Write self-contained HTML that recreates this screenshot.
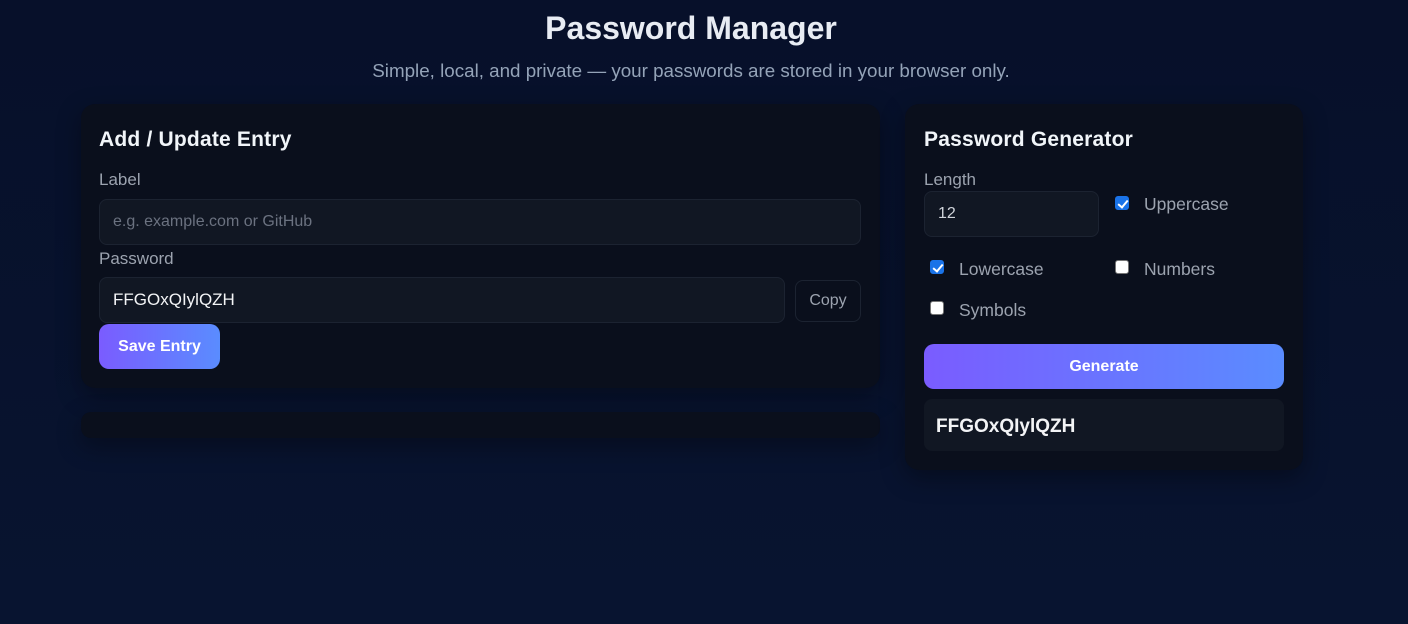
<!DOCTYPE html>
<html><head><meta charset="utf-8"><style>
*{box-sizing:border-box;margin:0;padding:0}
body{width:1408px;height:624px;overflow:hidden;background:linear-gradient(180deg,#07102a 0%,#081430 100%);font-family:"Liberation Sans",sans-serif;color:#e5e7eb;position:relative}
.a{position:absolute}
h1{position:absolute;left:0;width:1382px;text-align:center;top:10px;font-size:32px;font-weight:bold;color:#e8ecf3}
.sub{left:0;width:1382px;text-align:center;top:60px;font-size:18.8px;color:#94a3b8}
.card{background:#0a0f1c;border-radius:14px;box-shadow:0 8px 24px rgba(0,0,0,.35)}
.h2{font-size:21px;font-weight:bold;color:#f1f5f9;letter-spacing:0.2px}
.lbl{font-size:17px;color:#9ca3af}
.inp{background:#111723;border:1px solid #1c2331;border-radius:8px;font-size:17px;padding-left:13px;display:flex;align-items:center}
.btn{background:linear-gradient(90deg,#7a5cff,#5a8cff);border-radius:10px;color:#fff;font-weight:bold;font-size:16px;display:flex;align-items:center;justify-content:center}
.cb{width:14px;height:14px;border-radius:3px;background:#fff;border:1px solid #767676}
.cb.on{background:#1a73e8;border-color:#1a73e8}
.cb.on::after{content:"";position:absolute;left:4px;top:1px;width:4px;height:8px;border:solid #fff;border-width:0 2px 2px 0;transform:rotate(40deg)}
.ct{font-size:17.5px;color:#9ca3af}
</style></head><body>
<h1>Password Manager</h1>
<div class="a sub">Simple, local, and private — your passwords are stored in your browser only.</div>

<div class="a card" style="left:81px;top:104px;width:799px;height:284px"></div>
<div class="a h2" style="left:99px;top:128px">Add / Update Entry</div>
<div class="a lbl" style="left:99px;top:170px">Label</div>
<div class="a inp" style="left:99px;top:199px;width:762px;height:46px;color:#6b7280;font-size:16px">e.g. example.com or GitHub</div>
<div class="a lbl" style="left:99px;top:249px">Password</div>
<div class="a inp" style="left:99px;top:277px;width:686px;height:46px;color:#f3f4f6">FFGOxQIylQZH</div>
<div class="a" style="left:795px;top:280px;width:66px;height:42px;border:1px solid #1c2331;border-radius:8px;color:#9ca3af;font-size:16px;display:flex;align-items:center;justify-content:center">Copy</div>
<div class="a btn" style="left:99px;top:324px;width:121px;height:45px">Save Entry</div>
<div class="a card" style="left:81px;top:412px;width:799px;height:26px;border-radius:10px"></div>

<div class="a card" style="left:905px;top:104px;width:398px;height:366px"></div>
<div class="a h2" style="left:924px;top:128px">Password Generator</div>
<div class="a lbl" style="left:924px;top:170px">Length</div>
<div class="a inp" style="left:924px;top:191px;width:175px;height:46px;color:#d1d5db;font-size:16px">12</div>
<div class="a cb on" style="left:1115px;top:196px"></div><div class="a ct" style="left:1144px;top:194px">Uppercase</div>
<div class="a cb on" style="left:930px;top:260px"></div><div class="a ct" style="left:959px;top:259px">Lowercase</div>
<div class="a cb" style="left:1115px;top:260px"></div><div class="a ct" style="left:1144px;top:259px">Numbers</div>
<div class="a cb" style="left:930px;top:301px"></div><div class="a ct" style="left:959px;top:300px">Symbols</div>
<div class="a btn" style="left:924px;top:344px;width:360px;height:45px">Generate</div>
<div class="a" style="left:924px;top:399px;width:360px;height:52px;background:#111723;border-radius:8px;font-size:19px;font-weight:bold;color:#f3f4f6;padding-left:12px;display:flex;align-items:center;padding-top:3px">FFGOxQIylQZH</div>
</body></html>
